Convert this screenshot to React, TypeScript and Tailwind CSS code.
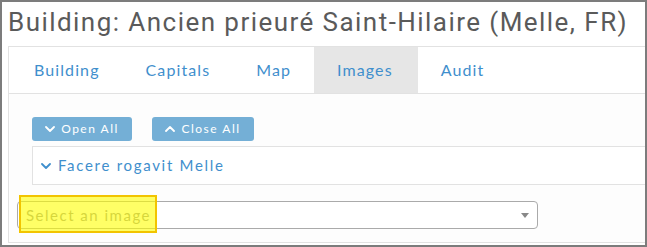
import React, { useState } from 'react';

const tabs = ['Building', 'Capitals', 'Map', 'Images', 'Audit'];

const ChevronDown = ({ className }: { className?: string }) => (
  <svg viewBox="0 0 10 6" className={className} fill="none" stroke="currentColor" strokeWidth="1.8" strokeLinecap="round" strokeLinejoin="round">
    <path d="M1 1l4 4 4-4" />
  </svg>
);

const ChevronUp = ({ className }: { className?: string }) => (
  <svg viewBox="0 0 10 6" className={className} fill="none" stroke="currentColor" strokeWidth="1.8" strokeLinecap="round" strokeLinejoin="round">
    <path d="M1 5l4-4 4 4" />
  </svg>
);

const App: React.FC = () => {
  const [active, setActive] = useState('Images');

  return (
    <div className="w-[647px] h-[247px] border-2 border-[#7c7c7c] bg-white overflow-hidden font-['Lato','Open_Sans',sans-serif]">
      <h1 className="pl-[6px] pt-[5px] mb-[9px] text-[26px] leading-[30px] tracking-[1.45px] text-[#5a5a5a] font-['Roboto','Liberation_Sans',sans-serif] whitespace-nowrap">
        Building: Ancien prieuré Saint-Hilaire (Melle, FR)
      </h1>

      <div className="ml-[6px] h-[197px] border border-r-0 border-[#e2e2e2] bg-[#fdfdfd]">
        <div className="flex h-[47px] border-b border-[#e2e2e2] bg-white pl-[2px]">
          {tabs.map(t => (
            <button
              key={t}
              onClick={() => setActive(t)}
              className={`h-[46px] px-[23px] text-[16px] tracking-[1.1px] text-[#3f8fcd] ${active === t ? 'bg-[#e6e6e6] pr-[25px]' : 'bg-white'}`}
            >
              {t}
            </button>
          ))}
        </div>

        <div className="pt-[23px] pl-[23px]">
          <div className="flex gap-[20px]">
            <button className="flex h-[24px] w-[100px] items-center justify-center gap-[6px] rounded-[3px] bg-[#74afd6] text-[12px] tracking-[1.5px] text-white">
              <ChevronDown className="w-[10px] h-[6px]" />
              Open All
            </button>
            <button className="flex h-[24px] w-[102px] items-center justify-center gap-[6px] rounded-[3px] bg-[#74afd6] text-[12px] tracking-[1.5px] text-white">
              <ChevronUp className="w-[10px] h-[6px]" />
              Close All
            </button>
          </div>
          <div className="mt-[5px] flex h-[39px] items-center gap-[7px] border border-r-0 border-[#e2e2e2] bg-white pl-[8px] text-[15px] tracking-[1.7px] text-[#3f8fcd]">
            <ChevronDown className="w-[10px] h-[6px]" />
            Facere rogavit Melle
          </div>
        </div>

        <div className="relative mt-[16px] ml-[8px] w-[521px]">
          <div className="flex h-[28px] items-center justify-between rounded-[4px] border border-[#aaa] bg-white pl-[8px] pr-[8px] text-[15px] tracking-[1.5px] text-[#999]">
            <span>Select an image</span>
            <svg viewBox="0 0 8 5" className="w-[8px] h-[5px]">
              <path d="M0 0h8L4 5z" fill="#888" />
            </svg>
          </div>
          <div className="absolute left-[2px] top-[-6px] h-[38px] w-[138px] border-2 border-[#f2c400] bg-[#ffff00]/60" />
        </div>
      </div>
    </div>
  );
};

export default App;
